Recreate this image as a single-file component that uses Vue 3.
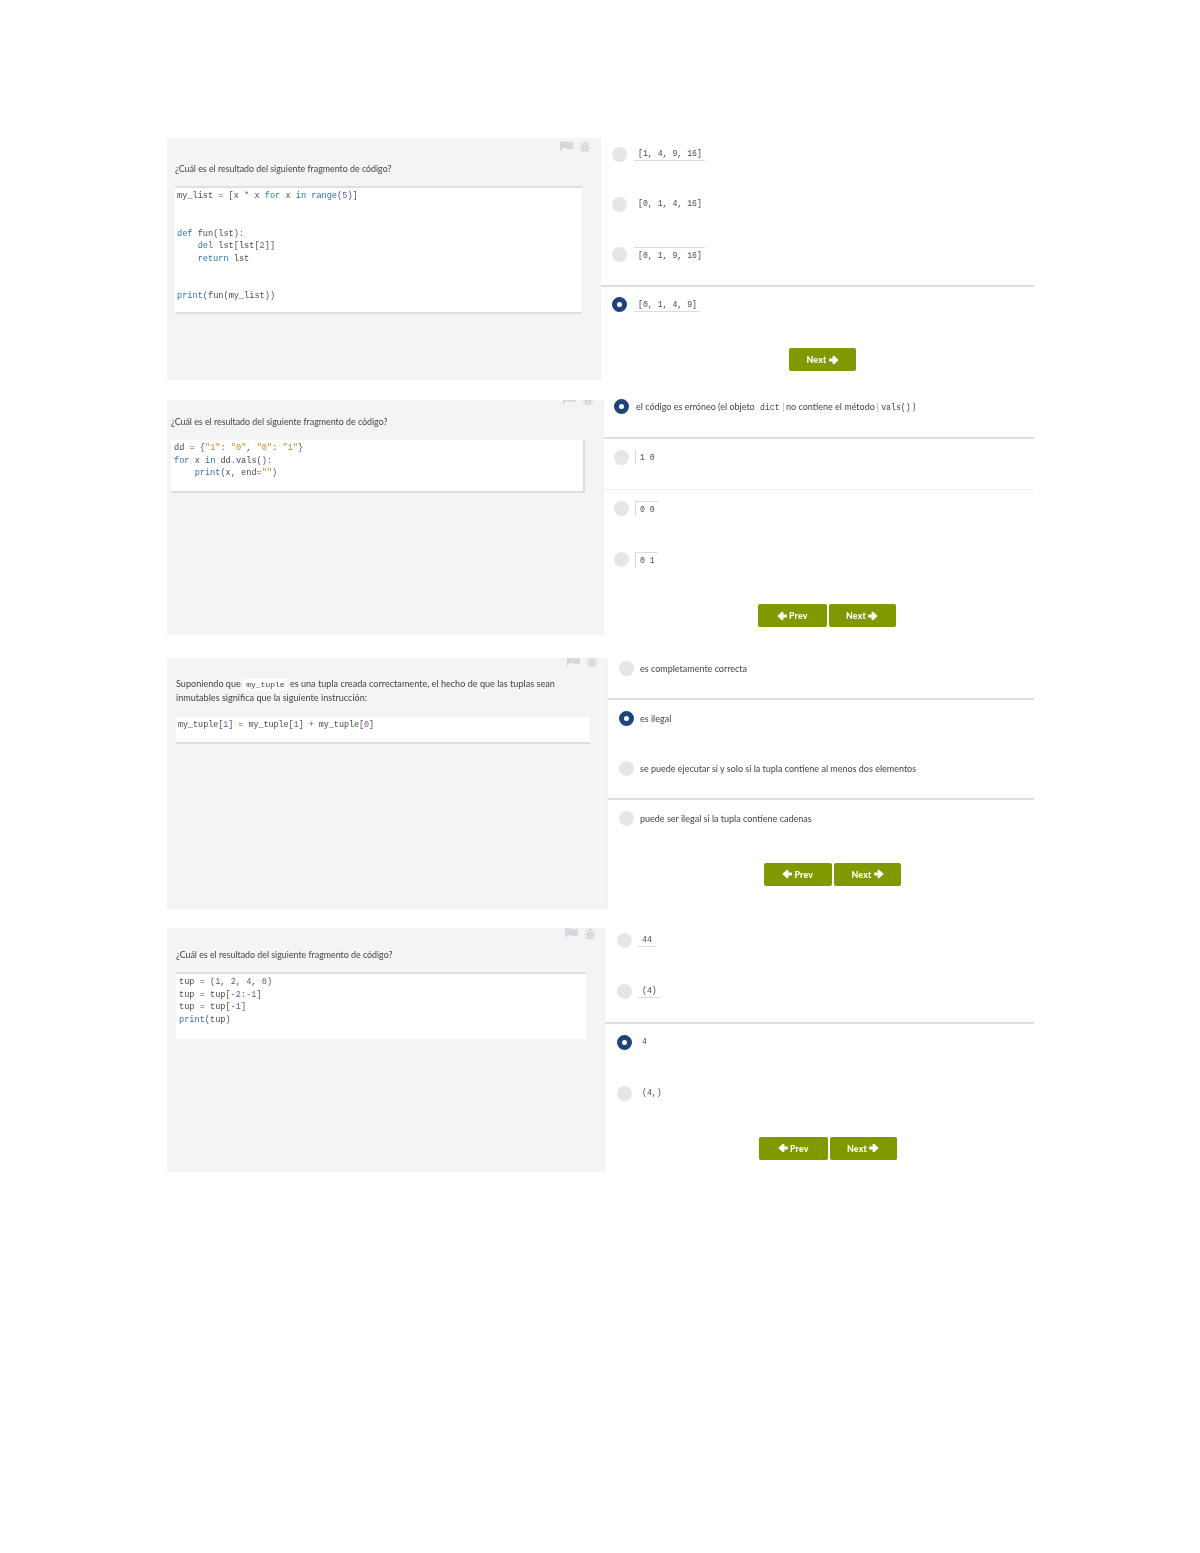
<script setup>
const tokenPattern = /(\b(?:def|del|return|for|in|print|range)\b)|(\d+)|("[^"]*")|([^\w\s"]+)/g

function highlight(source) {
  const tokens = []
  let last = 0
  for (const match of source.matchAll(tokenPattern)) {
    if (match.index > last) tokens.push({ text: source.slice(last, match.index), kind: 'plain' })
    const kind = match[1] ? 'keyword' : match[2] ? 'number' : match[3] ? 'string' : 'symbol'
    tokens.push({ text: match[0], kind })
    last = match.index + match[0].length
  }
  if (last < source.length) tokens.push({ text: source.slice(last), kind: 'plain' })
  return tokens
}

const questions = [
  {
    id: 'q1',
    text: ['¿Cuál es el resultado del siguiente fragmento de código?'],
    code: 'my_list = [x * x for x in range(5)]\n\n\ndef fun(lst):\n    del lst[lst[2]]\n    return lst\n\n\nprint(fun(my_list))',
    options: [
      { text: '[1, 4, 9, 16]', mono: true, deco: 'under' },
      { text: '[0, 1, 4, 16]', mono: true },
      { text: '[0, 1, 9, 16]', mono: true, deco: 'over', rule: 'strong' },
      { text: '[0, 1, 4, 9]', mono: true, deco: 'under', selected: true },
    ],
    prev: false,
  },
  {
    id: 'q2',
    text: ['¿Cuál es el resultado del siguiente fragmento de código?'],
    code: 'dd = {"1": "0", "0": "1"}\nfor x in dd.vals():\n    print(x, end="")',
    options: [
      { parts: ['el código es erróneo (el objeto ', 'dict', ' no contiene el método ', 'vals()', ' )'], selected: true, rule: 'strong' },
      { text: '1 0', mono: true, deco: 'side', rule: 'soft' },
      { text: '0 0', mono: true, deco: 'corner' },
      { text: '0 1', mono: true, deco: 'corner' },
    ],
    prev: true,
  },
  {
    id: 'q3',
    text: ['Suponiendo que ', 'my_tuple', ' es una tupla creada correctamente, el hecho de que las tuplas sean', 'inmutables significa que la siguiente instrucción:'],
    code: 'my_tuple[1] = my_tuple[1] + my_tuple[0]',
    options: [
      { text: 'es completamente correcta', rule: 'strong' },
      { text: 'es ilegal', selected: true },
      { text: 'se puede ejecutar si y solo si la tupla contiene al menos dos elementos', rule: 'strong' },
      { text: 'puede ser ilegal si la tupla contiene cadenas' },
    ],
    prev: true,
  },
  {
    id: 'q4',
    text: ['¿Cuál es el resultado del siguiente fragmento de código?'],
    code: 'tup = (1, 2, 4, 8)\ntup = tup[-2:-1]\ntup = tup[-1]\nprint(tup)',
    options: [
      { text: '44', mono: true, deco: 'under' },
      { text: '(4)', mono: true, deco: 'under', rule: 'strong' },
      { text: '4', mono: true, selected: true },
      { text: '(4,)', mono: true },
    ],
    prev: true,
  },
]
</script>

<template>
  <main class="page">
    <section v-for="q in questions" :key="q.id" class="block" :class="q.id">
      <div class="prompt">
        <div class="tools">
          <svg class="flag" viewBox="0 0 13 10" aria-hidden="true">
            <path d="M0 0h1.500v10H0zM1.500.8c2.200-1 4-.6 5.700.1 1.700.6 3.500.8 5.800-.4v6.900c-2.300 1.200-4.100 1-5.800.4-1.700-.7-3.500-1.100-5.700-.1z" />
          </svg>
          <svg class="bug" viewBox="0 0 12 12" aria-hidden="true">
            <path d="M3.600 2.800C3.800 1.300 4.800.5 6 .5s2.200.8 2.400 2.300zM3.400 3.600h5.200c.6.900.8 1.900.8 3.100 0 2.800-1.300 4.800-3 4.800V5.400h-.8v6.100c-1.700 0-3-2-3-4.800 0-1.200.2-2.200.8-3.100z" />
            <path class="legs" d="M3.400 4 1 2.200M8.600 4 11 2.200M2.600 6.800H0M9.400 6.800H12M3 9.200 1 11M9 9.200l2 1.800" />
          </svg>
        </div>
        <p class="question">
          <template v-for="(part, i) in q.text" :key="i">
            <code v-if="i === 1" class="inline-code">{{ part }}</code>
            <template v-else>{{ part }}</template>
            <br v-if="i === 2">
          </template>
        </p>
        <pre class="code"><template v-for="(token, i) in highlight(q.code)" :key="i"><span :class="token.kind">{{ token.text }}</span></template></pre>
      </div>

      <div class="answers">
        <ul class="options">
          <li v-for="(option, i) in q.options" :key="i" class="option" :class="option.rule">
            <span class="radio" :class="{ selected: option.selected }"></span>
            <span class="label" :class="[option.deco, { mono: option.mono }]">
              <template v-if="option.parts">
                <template v-for="(part, p) in option.parts" :key="p">
                  <code v-if="p % 2" class="option-code" :class="p === 1 ? 'bar-after' : 'bar-before'">{{ part }}</code>
                  <template v-else>{{ part }}</template>
                </template>
              </template>
              <template v-else>{{ option.text }}</template>
            </span>
          </li>
        </ul>
        <div class="actions">
          <button v-if="q.prev" type="button" class="btn prev">
            <svg viewBox="0 0 10 10" aria-hidden="true"><path d="M5.200.4 7 2.200 5.600 3.500H9.800v3H5.600L7 7.800 5.200 9.600.3 5z" /></svg>
            Prev
          </button>
          <button type="button" class="btn next">
            Next
            <svg viewBox="0 0 10 10" aria-hidden="true"><path d="M4.800.4 3 2.200 4.400 3.500H.2v3h4.200L3 7.800l1.800 1.800L9.700 5z" /></svg>
          </button>
        </div>
      </div>
    </section>
  </main>
</template>

<style>
html,
body {
  margin: 0;
  background: #fff;
}
</style>

<style scoped>
.page {
  box-sizing: border-box;
  width: 1200px;
  height: 1553px;
  padding: 138px 166px 0 167px;
  font-family: Lato, "Liberation Sans", sans-serif;
  color: #444;
  filter: blur(0.6px);
}

.block {
  display: flex;
}

.q1 { height: 242px; }
.q2 { height: 235px; margin-top: 20px; }
.q3 { height: 251px; margin-top: 23px; }
.q4 { height: 244px; margin-top: 19px; }

.prompt {
  position: relative;
  box-sizing: border-box;
  flex: none;
  overflow: hidden;
  background: #f4f4f4;
}

.q1 .prompt { width: 433px; padding: 24px 18px 0 8px; }
.q2 .prompt { width: 436px; padding: 15px 18px 0 4px; }
.q3 .prompt { width: 440px; padding: 19px 17px 0 9px; }
.q4 .prompt { width: 437px; padding: 20px 18px 0 9px; }

.tools {
  position: absolute;
  display: flex;
  gap: 6px;
  fill: #d3d8dd;
}

.q1 .tools { top: 3px; right: 9px; }
.q2 .tools { top: -6px; right: 9px; }
.q3 .tools { top: -2px; right: 9px; }
.q4 .tools { top: 0; right: 8px; }

.flag {
  width: 13px;
  height: 10px;
}

.bug {
  width: 12px;
  height: 12px;
}

.legs {
  fill: none;
  stroke: #d3d8dd;
  stroke-width: 1;
}

.question {
  margin: 0;
  font-size: 8.850px;
  line-height: 14px;
}

.q3 .question {
  font-size: 9.100px;
}

.inline-code {
  display: inline-block;
  padding: 0 3px;
  background: #fff;
  font-family: "Liberation Mono", monospace;
  font-size: 8px;
  line-height: 12px;
}

.code {
  box-sizing: border-box;
  margin: 10px 0 0;
  background: #fff;
  font-family: "Liberation Mono", monospace;
  font-size: 8.600px;
  line-height: 12.500px;
  color: #4a4a4a;
}

.q1 .code {
  height: 128px;
  margin-top: 10px;
  padding: 2px 2px 0;
  border-top: 2px solid #e0e0e0;
  border-bottom: 2px solid #e0e0e0;
}

.q2 .code {
  width: 414px;
  height: 53px;
  margin-top: 11px;
  padding: 2px 3px 0;
  border-right: 2px solid #dedede;
  border-bottom: 2px solid #dedede;
}

.q3 .code {
  height: 27px;
  margin-top: 12px;
  padding: 2px 2px 0;
  font-size: 8.400px;
  border-bottom: 2px solid #e0e0e0;
}

.q4 .code {
  height: 67px;
  margin-top: 10px;
  padding: 2px 3px 0;
  border-top: 2px solid #e0e0e0;
}

.keyword { color: #2f6fb5; }
.number { color: #8e44ad; }
.string { color: #c78a2c; }
.symbol { color: #555; }

.answers {
  box-sizing: border-box;
  flex: 1;
  min-width: 0;
  border-left: 1px solid #f1f1f1;
}

.options {
  margin: 0;
  padding: 0;
  list-style: none;
}

.q1 .options { margin-top: -2px; }
.q2 .options { margin-top: -11.700px; }
.q3 .options { margin-top: -7.700px; }
.q4 .options { margin-top: -6.300px; }

.option {
  box-sizing: border-box;
  display: flex;
  align-items: flex-start;
  height: 51px;
  padding: 11px 0 0 10px;
}

.q1 .option {
  height: 50.330px;
  padding-top: 10.500px;
  padding-left: 11px;
}

.q3 .option {
  height: 50px;
  padding-left: 11px;
}

.q4 .option {
  padding-left: 12px;
}

.strong { border-bottom: 2px solid #dedede; }
.soft { border-bottom: 1px solid #eeeeee; }

.radio {
  box-sizing: border-box;
  flex: none;
  width: 15px;
  height: 15px;
  border-radius: 50%;
  background: #e6e6e6;
}

.radio.selected {
  border: 5px solid #1f447a;
  background: #fff;
}

.label {
  box-sizing: border-box;
  margin-left: 4px;
  padding: 0 2px;
  font-size: 9px;
  line-height: 15px;
  white-space: nowrap;
}

.label.mono {
  margin-left: 6px;
  padding: 1.500px 3px 0 4px;
  font-family: "Liberation Mono", monospace;
  font-size: 8.200px;
  line-height: 12px;
  color: #4a4a4a;
}

.q1 .label.mono {
  margin-left: 7px;
}

.q2 .label:not(.mono) {
  margin-left: 5px;
}

.under { border-bottom: 1px solid #dcdcdc; }
.over { border-top: 1px solid #dcdcdc; }
.side { border-left: 1px solid #d6d6d6; }
.corner { border-top: 1px solid #dcdcdc; border-left: 1px solid #d6d6d6; }

.option-code {
  font-family: "Liberation Mono", monospace;
  font-size: 8.200px;
}

.bar-after {
  padding: 0 3px;
  border-right: 1px solid #c8c8c8;
}

.bar-before {
  padding-left: 3px;
  border-left: 1px solid #c8c8c8;
}

.actions {
  display: flex;
  gap: 2px;
  margin-top: 12px;
}

.q1 .actions { padding-left: 188px; margin-top: 11px; }
.q2 .actions { padding-left: 154px; }
.q3 .actions { padding-left: 155.500px; margin-top: 12.400px; }
.q4 .actions { padding-left: 154px; margin-top: 11px; }

.btn {
  display: inline-flex;
  align-items: center;
  justify-content: center;
  gap: 2px;
  box-sizing: border-box;
  width: 67px;
  height: 23px;
  padding: 0;
  border: 0;
  border-radius: 2px;
  background: #7f9a00;
  font: 900 8.800px Lato, "Liberation Sans", sans-serif;
  letter-spacing: 0.2px;
  color: #fff;
}

.prev { width: 68.500px; }

.btn svg {
  width: 10px;
  height: 10px;
  fill: #fff;
}
</style>
